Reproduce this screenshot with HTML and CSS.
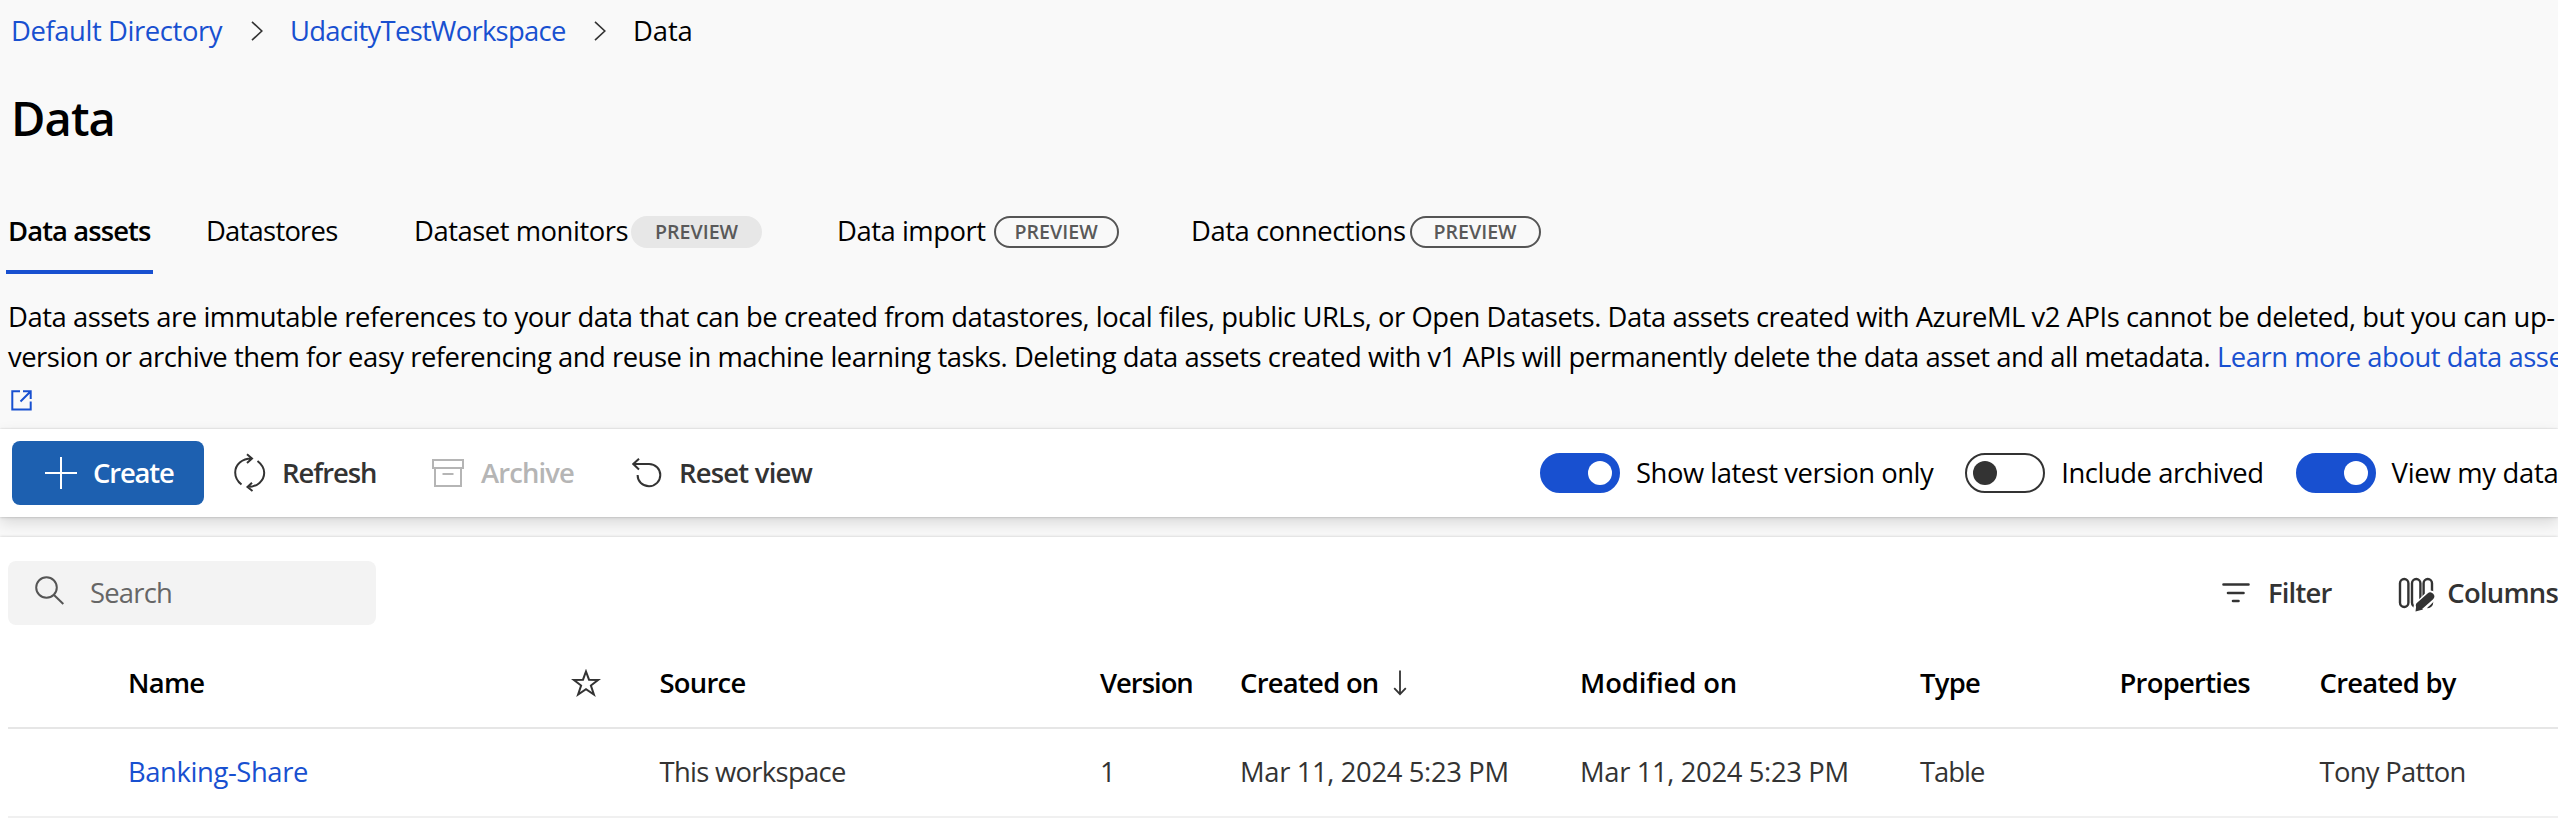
FILE: index.html
```html
<!DOCTYPE html>
<html lang="en">
<head>
<meta charset="utf-8">
<title>Data</title>
<link rel="stylesheet" href="styles.css">
</head>
<body>
<header class="header">
  <nav class="crumbs">
    <a class="link crumb-dir">Default Directory</a>
    <svg class="chevron" width="12" height="20" viewBox="0 0 12 20"><path d="M1 .8 10.8 10 1 19.2"/></svg>
    <a class="link crumb-ws">UdacityTestWorkspace</a>
    <svg class="chevron" width="12" height="20" viewBox="0 0 12 20"><path d="M1 .8 10.8 10 1 19.2"/></svg>
    <span class="crumb-here">Data</span>
  </nav>
  <h1 class="title">Data</h1>
  <div class="tabs">
    <div class="tab active">Data assets</div>
    <div class="tab tab-stores">Datastores</div>
    <div class="tab">Dataset monitors<span class="pill filled">PREVIEW</span></div>
    <div class="tab">Data import<span class="pill narrow">PREVIEW</span></div>
    <div class="tab">Data connections<span class="pill">PREVIEW</span></div>
  </div>
  <p class="intro">Data assets are immutable references to your data that can be created from datastores, local files, public URLs, or Open Datasets. Data assets created with AzureML v2 APIs cannot be deleted, but you can up-<br><span class="line-two">version or archive them for easy referencing and reuse in machine learning tasks. Deleting data assets created with v1 APIs will permanently delete the data asset and all metadata.</span> <a class="link">Learn more about data assets<br>
    <svg class="external" width="22" height="21" viewBox="0 0 22 21"><path d="M9 1.3H1.3v18.2h18.4v-8M12 1.3h7.7V9M9.5 11.5 19.5 1.5"/></svg></a></p>
</header>

<section class="toolbar">
  <div class="actions">
    <button class="create"><svg width="32" height="32" viewBox="0 0 32 32"><path d="M16 0v32M0 16h32" stroke="#fff" stroke-width="2"/></svg><span>Create</span></button>
    <div class="action refresh"><svg width="32" height="40" viewBox="0 0 32 40"><path d="M7.5 31.5C3 28 1.2 24 1.2 19.5 1.2 11.500 8 5.500 17.500 5.500M23.500 8C28 11.500 30.200 15.500 30.200 19.800 30.200 27.800 23 34 14 34M13 1.200l5 4.300-5 4.500M18 29.800 13.500 34l5 4"/></svg><span>Refresh</span></div>
    <div class="action archive"><svg width="32" height="28" viewBox="0 0 32 28"><path d="M1 1h30v8H1zM3 9v18h26V9M10.500 15h11"/></svg><span>Archive</span></div>
    <div class="action reset"><svg width="30" height="30" viewBox="0 0 30 30"><path d="M1.500 6H17c6.500 0 11.300 5 11.300 11S23.500 28.200 17 28.200 5.600 23.500 5.600 17M7 .8 1.300 6 7 11.500"/></svg><span>Reset view</span></div>
  </div>
  <div class="toggles">
    <span class="switch on"></span><span class="switch-label">Show latest version only</span>
    <span class="switch"></span><span class="switch-label">Include archived</span>
    <span class="switch on"></span><span class="switch-label last">View my data assets</span>
  </div>
</section>

<main class="panel">
  <div class="panel-tools">
    <div class="search"><svg width="30" height="30" viewBox="0 0 30 30"><circle cx="11.500" cy="11.500" r="10.300"/><path d="M19 19l9.300 9"/></svg><span>Search</span></div>
    <div class="action filter"><svg width="28" height="20" viewBox="0 0 28 20"><path d="M1.500 1.500h25M6 10h15.500M11 18h5.500"/></svg><span>Filter</span></div>
    <div class="action columns"><svg width="38" height="36" viewBox="0 0 38 36"><rect x="2" y="2" width="8.400" height="28" rx="4.200"/><rect x="14" y="2" width="8.400" height="28" rx="4.200"/><rect x="25.600" y="2" width="8.400" height="28" rx="4.200"/><path class="pencil-gap" d="M21.500 30 32.500 19.500"/><path class="pencil" d="M22 28.500 32.200 19.500"/><path class="tip" d="M18.500 26.500 17.500 34.500 25 32.500z"/></svg><span>Columns</span></div>
  </div>
  <div class="table">
    <div class="row head">
      <span>Name</span>
      <span><svg class="star" width="30" height="28" viewBox="0 0 30 28"><path d="M15 2.500 18 10.700 27.300 10.900 19.900 16.500 22.900 25.500 15 20.200 7.100 25.500 10.100 16.500 2.700 10.900 12 10.700z"/></svg></span>
      <span>Source</span><span class="tight">Version</span>
      <span class="sorted">Created on<svg width="14" height="26" viewBox="0 0 14 26"><path d="M7 .5v23.500M1.200 18.200 7 24.200l5.800-6"/></svg></span>
      <span class="wide">Modified on</span><span>Type</span><span>Properties</span><span>Created by</span>
    </div>
    <div class="row">
      <a class="link">Banking-Share</a><span></span><span class="snug">This workspace</span><span>1</span>
      <span class="date">Mar 11, 2024 5:23 PM</span><span class="date">Mar 11, 2024 5:23 PM</span>
      <span class="tight">Table</span><span></span><span class="snug">Tony Patton</span>
    </div>
  </div>
</main>
</body>
</html>
```
FILE: styles.css
```css
* { box-sizing: border-box; }

body {
  margin: 0;
  height: 818px;
  overflow: hidden;
  background: #f9f9f9;
  color: #000;
  font: 400 27.4px/40px "Open Sans", "Noto Sans", sans-serif;
  letter-spacing: -0.46px;
  white-space: nowrap;
}

svg { display: block; flex: none; fill: none; }
.link { color: #1850d0; }

.header { height: 429px; }

.crumbs { display: flex; align-items: center; height: 62px; padding-left: 11px; }
.chevron { margin: 0 27.5px; stroke: #333; stroke-width: 1.6; }
.crumb-dir { width: 212px; letter-spacing: -0.4px; }
.crumb-ws { width: 276px; letter-spacing: -0.7px; }
.crumb-here { letter-spacing: -0.1px; }

.title {
  margin: 26px 0 42px 11px;
  font-size: 47px;
  line-height: 60px;
  font-weight: 600;
  letter-spacing: -0.9px;
}

.tabs {
  display: grid;
  grid-template-columns: 200px 208px 423px 354px auto;
  height: 84px;
  padding-left: 6px;
}
.tab { display: flex; align-items: center; height: 80px; padding-top: 2px; }
.active {
  width: 147px;
  height: 84px;
  padding-left: 2px;
  border-bottom: 4px solid #1850d0;
  font-weight: 600;
  letter-spacing: -0.9px;
}
.tab-stores { letter-spacing: -0.75px; }
.pill {
  width: 131px;
  height: 32px;
  margin: 2px 0 0 4px;
  border: 2px solid #555;
  border-radius: 16px;
  color: #595959;
  font-size: 19.6px;
  line-height: 28px;
  font-weight: 600;
  letter-spacing: 0;
  text-align: center;
}
.narrow { width: 125px; margin-left: 8px; }
.filled { margin-left: 3px; background: #e7e7e7; border-color: #e7e7e7; }

.intro { margin: 22.5px 0 0; padding-left: 8px; }
.line-two { letter-spacing: -0.47px; }
.external { margin: 13px 0 0 3px; stroke: #1850d0; stroke-width: 2; }

.toolbar {
  display: flex;
  align-items: center;
  height: 88px;
  background: #fff;
  box-shadow: 0 6.4px 14.4px rgba(0, 0, 0, .13), 0 1.2px 3.6px rgba(0, 0, 0, .11), 0 0 2px rgba(0, 0, 0, .15);
}
.actions { display: flex; align-items: center; flex: none; width: 1540px; padding-left: 12px; }
.create {
  display: flex;
  align-items: center;
  gap: 16px;
  width: 192px;
  height: 64px;
  padding: 0 0 0 33px;
  border: 0;
  border-radius: 8px;
  background: #1d60b0;
  color: #fff;
  font: inherit;
  font-weight: 600;
  letter-spacing: -1.13px;
}
.action {
  display: flex;
  align-items: center;
  color: #333;
  font-weight: 600;
  letter-spacing: -0.76px;
}
.action svg { stroke: currentColor; stroke-width: 2; }
.refresh { width: 198px; margin-left: 30px; gap: 16px; letter-spacing: -1.02px; }
.archive { width: 200px; gap: 17px; color: #b5b5b5; letter-spacing: -0.86px; }
.reset { gap: 17px; }

.toggles { display: flex; align-items: center; }
.switch {
  display: flex;
  align-items: center;
  flex: none;
  width: 80px;
  height: 40px;
  padding: 0 6px;
  border: 2px solid #333;
  border-radius: 20px;
}
.switch::before { content: ""; width: 24px; height: 24px; border-radius: 50%; background: #333; }
.on { justify-content: flex-end; border-color: #1850d0; background: #1850d0; }
.on::before { background: #fff; }
.switch-label { margin: 0 32px 0 16px; }
.last { letter-spacing: -0.27px; }

.panel {
  height: 281px;
  margin-top: 20px;
  padding-left: 8px;
  background: #fff;
  box-shadow: 0 0 3px rgba(0, 0, 0, .2);
}
.panel-tools { display: flex; padding-top: 24px; height: 88px; }
.search {
  display: flex;
  align-items: center;
  gap: 25px;
  width: 369px;
  height: 64px;
  padding-left: 27px;
  border-radius: 8px;
  background: #f3f3f3;
  color: #666;
  letter-spacing: -0.78px;
}
.search svg { margin-top: -4px; stroke: #555; stroke-width: 2; }
.filter { height: 64px; margin-left: 1846px; width: 177px; gap: 18px; }
.filter svg { stroke-width: 2.6; stroke-linecap: round; }
.columns { height: 64px; gap: 11px; }
.columns svg { margin-top: 3px; stroke-width: 2.4; }
.columns .pencil-gap { stroke: #fff; stroke-width: 12; stroke-linecap: round; }
.columns .pencil { stroke-width: 8; stroke-linecap: round; }
.columns .tip { fill: currentColor; stroke: none; }

.table { padding-top: 24px; }
.row {
  display: grid;
  grid-template-columns: 443px 88.500px 440.500px 140px 340px 340px 199.500px 200px auto;
  align-items: center;
  height: 89px;
  padding: 0 0 2px 120px;
  border-bottom: 2px solid #f0f0f0;
  color: #333;
}
.head {
  height: 80px;
  padding-bottom: 10px;
  border-color: #e6e6e6;
  color: #000;
  font-weight: 600;
  letter-spacing: -0.72px;
}
.star { stroke: #333; stroke-width: 2; }
.sorted { display: flex; align-items: center; gap: 14px; }
.sorted svg { stroke: #333; stroke-width: 1.8; }
.row .tight { letter-spacing: -1px; }
.row .wide { letter-spacing: -0.1px; }
.row .snug { letter-spacing: -0.69px; }
.row .date { letter-spacing: -0.36px; }
.row .link { letter-spacing: -0.4px; }
```
